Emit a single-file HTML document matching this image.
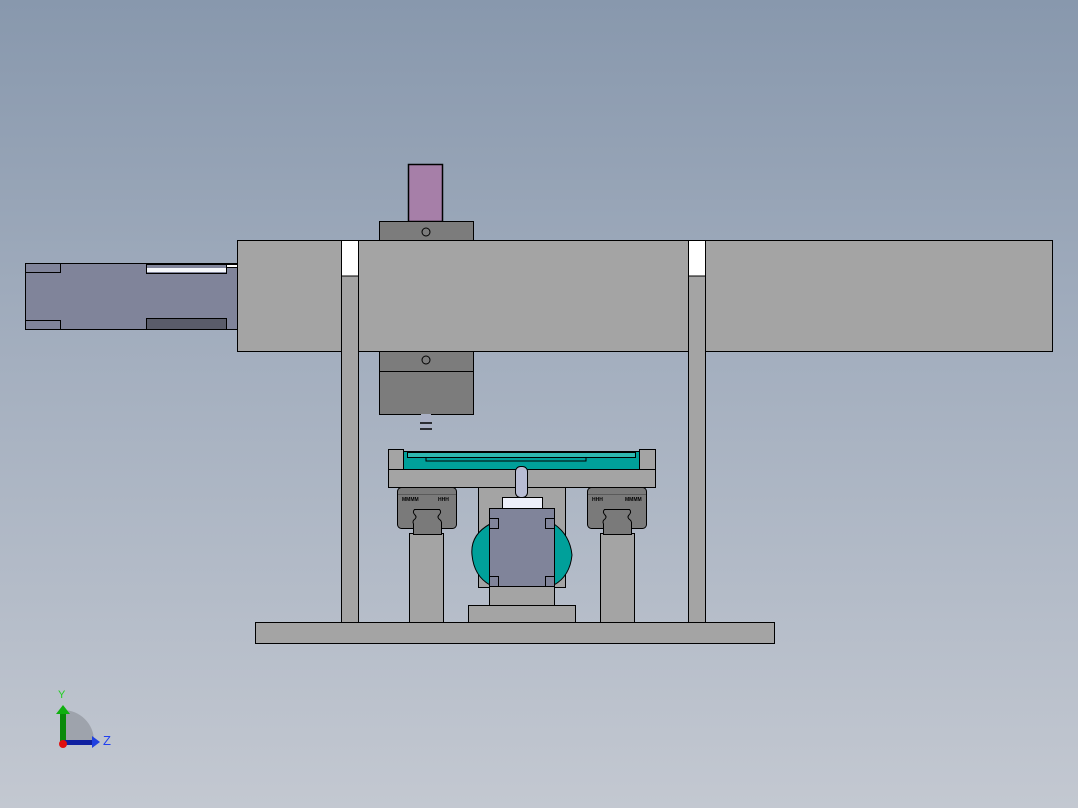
<!DOCTYPE html>
<html><head><meta charset="utf-8"><style>
html,body{margin:0;padding:0;width:1078px;height:808px;overflow:hidden}
body{background:linear-gradient(#8898ad 0%,#a4afbf 45%,#c3c8d1 100%)}
svg{display:block}
</style></head><body>
<svg width="1078" height="808" viewBox="0 0 1078 808" xmlns="http://www.w3.org/2000/svg" stroke="#000" stroke-width="1">
<!-- left motor -->
<rect x="25.5" y="263.5" width="212" height="66" fill="#80849a"/>
<path d="M25.5 272.5H60.5V263.5M25.5 320.5H60.5V329.5" fill="none"/>
<rect x="146.5" y="264.5" width="80" height="9" fill="#80849a"/>
<rect x="147" y="268" width="79" height="4" fill="#f4f6fa" stroke="none"/>
<rect x="146.5" y="318.5" width="80" height="11" fill="#5a5c6a"/>
<rect x="226.5" y="264.5" width="11" height="3" fill="#fff"/>
<!-- purple -->
<rect x="408.5" y="164.5" width="34" height="57" fill="#a67fa8" stroke-width="1.5"/>
<rect x="379.5" y="221.5" width="94" height="19" fill="#7c7c7c"/>
<circle cx="426" cy="232" r="4" fill="none"/>
<!-- beam -->
<rect x="237.5" y="240.5" width="815" height="111" fill="#a4a4a4"/>
<!-- posts -->
<rect x="341.5" y="240.5" width="17" height="382" fill="#a4a4a4"/>
<rect x="342" y="241" width="16" height="35" fill="#fff" stroke="none"/>
<line x1="341.5" y1="276" x2="358.5" y2="276"/>
<rect x="688.5" y="240.5" width="17" height="382" fill="#a4a4a4"/>
<rect x="689" y="241" width="16" height="35" fill="#fff" stroke="none"/>
<line x1="688.5" y1="276" x2="705.5" y2="276"/>
<!-- lower block -->
<rect x="379.5" y="351.5" width="94" height="63" fill="#7c7c7c"/>
<line x1="379.5" y1="371.5" x2="473.5" y2="371.5"/>
<circle cx="426" cy="360" r="4" fill="none"/>
<rect x="421" y="414" width="10" height="16" fill="#aab0c4" stroke="none"/>
<path d="M420 423H432M420 429H432" stroke-width="1.5"/>
<!-- center column behind -->
<rect x="478.5" y="487.5" width="87" height="100" fill="#a4a4a4"/>
<!-- table -->
<rect x="388.5" y="449.5" width="15" height="20" fill="#a4a4a4"/>
<rect x="639.5" y="449.5" width="16" height="20" fill="#a4a4a4"/>
<rect x="403.5" y="451.5" width="236" height="18" fill="#00a09a"/>
<rect x="407.5" y="452.5" width="228" height="5" fill="#2fb8b0"/>
<path d="M426 457V461H586V457" fill="none"/>
<rect x="388.5" y="469.5" width="267" height="18" fill="#a4a4a4"/>
<!-- columns -->
<rect x="409.5" y="533.5" width="34" height="89" fill="#a4a4a4"/>
<rect x="600.5" y="533.5" width="34" height="89" fill="#a4a4a4"/>
<!-- rail blocks -->
<rect x="397.5" y="487.5" width="59" height="41" rx="4" fill="#7a7a7a"/>
<line x1="398" y1="494.5" x2="456" y2="494.5" stroke="#5a5a5a"/>
<path d="M414.5 509.5H439.5Q442 512 439 515Q437 517 439 519Q442 521 441.5 524V534.5H413.5V524Q412 521 415 519Q417 517 415 515Q412 512 414.5 509.5Z" fill="#7a7a7a"/>
<rect x="587.5" y="487.5" width="59" height="41" rx="4" fill="#7a7a7a"/>
<line x1="588" y1="494.5" x2="646" y2="494.5" stroke="#5a5a5a"/>
<path d="M604.5 509.5H629.5Q632 512 629 515Q627 517 629 519Q632 521 631.5 524V534.5H603.5V524Q602 521 605 519Q607 517 605 515Q602 512 604.5 509.5Z" fill="#7a7a7a"/>
<text x="402" y="501" font-size="5" font-weight="bold" font-family="Liberation Sans" stroke="none">MMMM</text>
<text x="438" y="501" font-size="5" font-weight="bold" font-family="Liberation Sans" stroke="none">HHH</text>
<text x="592" y="501" font-size="5" font-weight="bold" font-family="Liberation Sans" stroke="none">HHH</text>
<text x="625" y="501" font-size="5" font-weight="bold" font-family="Liberation Sans" stroke="none">MMMM</text>
<!-- teal ring -->
<path d="M490 524Q470 535 472 555Q474 576 490 585H554Q570 576 572 555Q570 535 554 524Z" fill="#00a09a"/>
<!-- motor -->
<rect x="489.5" y="508.5" width="65" height="78" fill="#80849a"/>
<path d="M489.5 518.5H498.5V528.5H489.5M554.5 518.5H545.5V528.5H554.5M489.5 576.5H498.5V586.5M554.5 576.5H545.5V586.5" fill="none"/>
<rect x="502.5" y="497.5" width="40" height="11" fill="#eef0fa"/>
<rect x="515.5" y="466.5" width="12" height="31" rx="5" fill="#b8bcd4"/>
<!-- bases -->
<rect x="489.5" y="586.5" width="65" height="19" fill="#a4a4a4"/>
<rect x="468.5" y="605.5" width="107" height="17" fill="#a4a4a4"/>
<rect x="255.5" y="622.5" width="519" height="21" fill="#a4a4a4"/>
<!-- axis triad -->
<path d="M63 710A31 31 0 0 1 94 741H63Z" fill="#9ea3ac" stroke="none"/>
<rect x="60" y="712" width="6" height="30" fill="#0a8a0a" stroke="none"/>
<path d="M56 714L63 705L70 714Z" fill="#10b010" stroke="none"/>
<rect x="63" y="740" width="30" height="5" fill="#1020a0" stroke="none"/>
<path d="M92 736L100 742L92 748Z" fill="#2040e0" stroke="none"/>
<circle cx="63" cy="744" r="4" fill="#e01010" stroke="none"/>
<text x="58" y="698" font-size="11" fill="#20d020" stroke="none" font-family="Liberation Sans">Y</text>
<text x="103" y="745" font-size="13" fill="#2040f0" stroke="none" font-family="Liberation Sans">Z</text>
</svg>
</body></html>
